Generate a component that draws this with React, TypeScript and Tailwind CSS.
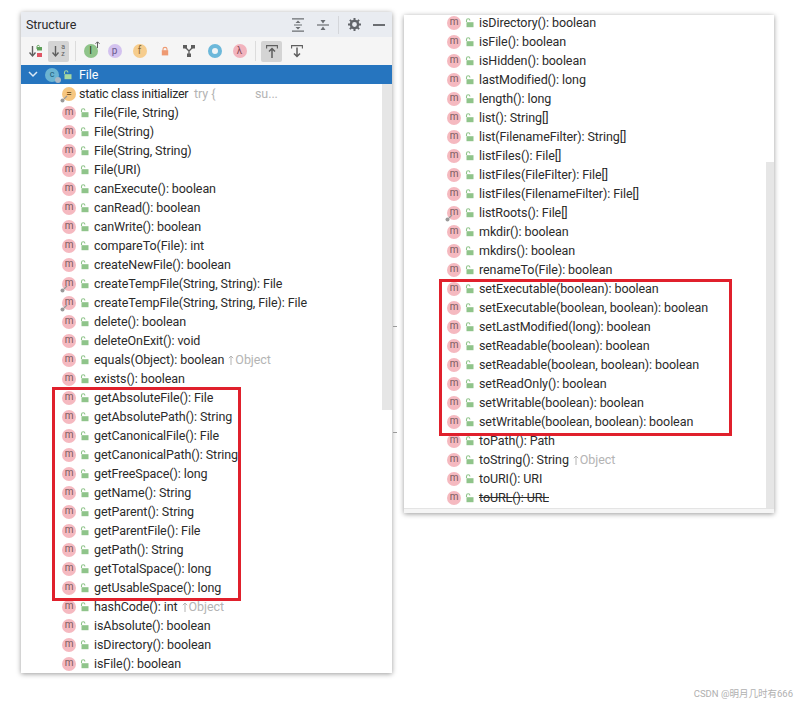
const font = { fontFamily: 'Roboto, "Noto Sans CJK SC", sans-serif' };

type Row = { text: string; inherited?: boolean; pin?: boolean; deprecated?: boolean };

const leftRows: Row[] = [
  { text: "File(File, String)" },
  { text: "File(String)" },
  { text: "File(String, String)" },
  { text: "File(URI)" },
  { text: "canExecute(): boolean" },
  { text: "canRead(): boolean" },
  { text: "canWrite(): boolean" },
  { text: "compareTo(File): int" },
  { text: "createNewFile(): boolean" },
  { text: "createTempFile(String, String): File", pin: true },
  { text: "createTempFile(String, String, File): File", pin: true },
  { text: "delete(): boolean" },
  { text: "deleteOnExit(): void" },
  { text: "equals(Object): boolean", inherited: true },
  { text: "exists(): boolean" },
  { text: "getAbsoluteFile(): File" },
  { text: "getAbsolutePath(): String" },
  { text: "getCanonicalFile(): File" },
  { text: "getCanonicalPath(): String" },
  { text: "getFreeSpace(): long" },
  { text: "getName(): String" },
  { text: "getParent(): String" },
  { text: "getParentFile(): File" },
  { text: "getPath(): String" },
  { text: "getTotalSpace(): long" },
  { text: "getUsableSpace(): long" },
  { text: "hashCode(): int", inherited: true },
  { text: "isAbsolute(): boolean" },
  { text: "isDirectory(): boolean" },
  { text: "isFile(): boolean" },
];

const rightRows: Row[] = [
  { text: "isDirectory(): boolean" },
  { text: "isFile(): boolean" },
  { text: "isHidden(): boolean" },
  { text: "lastModified(): long" },
  { text: "length(): long" },
  { text: "list(): String[]" },
  { text: "list(FilenameFilter): String[]" },
  { text: "listFiles(): File[]" },
  { text: "listFiles(FileFilter): File[]" },
  { text: "listFiles(FilenameFilter): File[]" },
  { text: "listRoots(): File[]", pin: true },
  { text: "mkdir(): boolean" },
  { text: "mkdirs(): boolean" },
  { text: "renameTo(File): boolean" },
  { text: "setExecutable(boolean): boolean" },
  { text: "setExecutable(boolean, boolean): boolean" },
  { text: "setLastModified(long): boolean" },
  { text: "setReadable(boolean): boolean" },
  { text: "setReadable(boolean, boolean): boolean" },
  { text: "setReadOnly(): boolean" },
  { text: "setWritable(boolean): boolean" },
  { text: "setWritable(boolean, boolean): boolean" },
  { text: "toPath(): Path" },
  { text: "toString(): String", inherited: true },
  { text: "toURI(): URI" },
  { text: "toURL(): URL", deprecated: true },
];

function Lock({ color = "#8fc48a" }: { color?: string }) {
  return (
    <svg width="9" height="10" viewBox="0 0 9 10" className="shrink-0">
      <path d="M1.5 4V2.6C1.5 1.4 2.3 .8 3.2 .8S4.9 1.4 4.9 2.4" fill="none" stroke={color} strokeWidth="1.1" />
      <rect x="1.5" y="4.2" width="7" height="5" fill={color} />
    </svg>
  );
}

function Pin() {
  return (
    <svg width="8" height="8" viewBox="0 0 8 8" className="absolute left-[-2px] bottom-[-2px]">
      <circle cx="2.5" cy="5.5" r="2" fill="#9a9a9a" />
      <path d="M4 4L7 1" stroke="#9a9a9a" strokeWidth="1.2" />
    </svg>
  );
}

function MethodRow({ row, indent }: { row: Row; indent: string }) {
  return (
    <div className={`flex items-center h-[19px] shrink-0 ${indent}`}>
      <div className="relative w-[14px] h-[14px] rounded-full bg-[#f5b9c0] flex items-center justify-center shrink-0">
        <span className="text-[10px] leading-none text-[#7a5a5e] mt-[-1px]">m</span>
        {row.pin && <Pin />}
      </div>
      <div className="ml-[4px] mr-[5px] flex">
        <Lock />
      </div>
      <span className={`text-[#2b2b2b] whitespace-nowrap ${row.deprecated ? "line-through" : ""}`}>{row.text}</span>
      {row.inherited && (
        <span className="ml-[4px] text-[#b4b4b4] whitespace-nowrap flex items-center">
          <svg width="6" height="10" viewBox="0 0 6 10" className="mr-px">
            <path d="M3 10V1M.8 3.2L3 1L5.2 3.2" fill="none" stroke="#b4b4b4" strokeWidth="1" />
          </svg>
          Object
        </span>
      )}
    </div>
  );
}

function ToolIcon({ className, active, children }: { className: string; active?: boolean; children: React.ReactNode }) {
  return (
    <div className={`w-[21px] h-[21px] flex items-center justify-center shrink-0 rounded-[2px] ${active ? "bg-[#d4d4d4]" : ""} ${className}`}>
      {children}
    </div>
  );
}

function Badge({ bg, fg, label }: { bg: string; fg: string; label: string }) {
  return (
    <div className="w-[14px] h-[14px] rounded-full flex items-center justify-center text-[10px] leading-none" style={{ backgroundColor: bg, color: fg }}>
      {label}
    </div>
  );
}

function SortArrow({ x }: { x: number }) {
  return (
    <g stroke="#5e5e5e" strokeWidth="1.4" fill="none">
      <path d={`M${x} 2V11`} />
      <path d={`M${x - 3} 8.5L${x} 12L${x + 3} 8.5`} />
    </g>
  );
}

function Structure() {
  return (
    <div className="w-[371px] h-[661px] ml-[21px] mt-[12px] shrink-0 flex flex-col bg-white shadow-[0_1px_5px_rgba(0,0,0,0.4)] relative overflow-hidden">
      <div className="h-[25px] bg-[#e9ecf1] flex items-center shrink-0">
        <span className="ml-[5px] text-[#2b2b2b]">Structure</span>
        <svg width="12" height="14" viewBox="0 0 12 14" className="ml-auto">
          <path d="M0 .8H12M0 13.2H12M2 7H10" stroke="#6b6e72" strokeWidth="1.2" />
          <path d="M6 2.5L3.5 5H8.5ZM6 11.5L3.5 9H8.5Z" fill="#6b6e72" />
        </svg>
        <svg width="12" height="14" viewBox="0 0 12 14" className="ml-[13px]">
          <path d="M0 7H12" stroke="#6b6e72" strokeWidth="1.2" />
          <path d="M6 5.5L3.5 2H8.5ZM6 8.5L3.5 12H8.5Z" fill="#6b6e72" />
        </svg>
        <div className="w-px h-[18px] bg-[#d4d6da] ml-[9px]" />
        <svg width="13" height="13" viewBox="0 0 13 13" className="ml-[9px]">
          <circle cx="6.5" cy="6.5" r="3.6" fill="none" stroke="#62656a" strokeWidth="2.4" />
          <path d="M6.5 0V2.5M6.5 10.5V13M0 6.5H2.5M10.5 6.5H13M1.9 1.9L3.6 3.6M9.4 9.4L11.1 11.1M1.9 11.1L3.6 9.4M9.4 3.6L11.1 1.9" stroke="#62656a" strokeWidth="2" />
        </svg>
        <div className="w-[12px] h-[2px] bg-[#6b6e72] ml-[12px] mr-[7px]" />
      </div>
      <div className="h-[28px] bg-[#f5f5f5] flex items-center shrink-0">
        <ToolIcon className="ml-[4px]">
          <svg width="14" height="14" viewBox="0 0 14 14">
            <SortArrow x={3.5} />
            <path d="M8 5V2.5C8 1 10.5 1 10.5 2.5" fill="none" stroke="#5fa05a" strokeWidth="1" />
            <rect x="8" y="3" width="5" height="3.5" fill="#5fa05a" />
            <rect x="8" y="9" width="5" height="4" fill="#e05565" />
          </svg>
        </ToolIcon>
        <ToolIcon className="ml-[2px]" active>
          <div className="flex items-center">
            <svg width="8" height="14" viewBox="0 0 8 14">
              <SortArrow x={3.5} />
            </svg>
            <div className="flex flex-col text-[7px] leading-[7px] text-[#5e5e5e] ml-[1px]">
              <span>a</span>
              <span>z</span>
            </div>
          </div>
        </ToolIcon>
        <div className="w-px h-[20px] bg-[#dcdcdc] ml-[6px]" />
        <ToolIcon className="ml-[4px]">
          <div className="relative">
            <Badge bg="#8fc48a" fg="#24401f" label="I" />
            <svg width="5" height="7" viewBox="0 0 5 7" className="absolute right-[-2px] top-[-3px]">
              <path d="M2.5 7V1M.5 2.8L2.5 .8L4.5 2.8" fill="none" stroke="#5e5e5e" strokeWidth="1" />
            </svg>
          </div>
        </ToolIcon>
        <ToolIcon className="ml-[3px]"><Badge bg="#d3c2ef" fg="#6a5a8c" label="p" /></ToolIcon>
        <ToolIcon className="ml-[4px]"><Badge bg="#f6cd8e" fg="#8c6a33" label="f" /></ToolIcon>
        <ToolIcon className="ml-[4px]">
          <svg width="8" height="10" viewBox="0 0 8 10">
            <path d="M2 4.5V3C2 .8 6 .8 6 3V4.5" fill="none" stroke="#ee9a72" strokeWidth="1.1" />
            <rect x=".8" y="4.2" width="6.4" height="5.2" fill="#ee9a72" />
          </svg>
        </ToolIcon>
        <ToolIcon className="ml-[3px]">
          <svg width="12" height="12" viewBox="0 0 12 12">
            <path d="M2 2L6 6L10 2M6 6V10" fill="none" stroke="#5e5e5e" strokeWidth="1.3" />
            <rect x="0" y="0" width="4" height="3.5" fill="#5e5e5e" />
            <rect x="8" y="0" width="4" height="3.5" fill="#5e5e5e" />
            <rect x="4" y="8.5" width="4" height="3.5" fill="#5e5e5e" />
          </svg>
        </ToolIcon>
        <ToolIcon className="ml-[5px]">
          <div className="w-[14px] h-[14px] rounded-full border-[4px] border-[#6cb8da] bg-[#f0f4f6]" />
        </ToolIcon>
        <ToolIcon className="ml-[4px]"><Badge bg="#f2b3bd" fg="#8a4a55" label="λ" /></ToolIcon>
        <div className="w-px h-[20px] bg-[#dcdcdc] ml-[5px]" />
        <ToolIcon className="ml-[5px]" active>
          <svg width="12" height="13" viewBox="0 0 12 13">
            <path d="M.6 3.5V.6H11.4V3.5" fill="none" stroke="#5e5e5e" strokeWidth="1.1" />
            <path d="M6 13V4M3 6.5L6 3.5L9 6.5" fill="none" stroke="#5e5e5e" strokeWidth="1.5" />
          </svg>
        </ToolIcon>
        <ToolIcon className="ml-[4px]">
          <svg width="12" height="13" viewBox="0 0 12 13">
            <path d="M.6 3.5V.6H11.4V3.5" fill="none" stroke="#5e5e5e" strokeWidth="1.1" />
            <path d="M6 2.5V11.5M3 8.5L6 11.5L9 8.5" fill="none" stroke="#5e5e5e" strokeWidth="1.5" />
          </svg>
        </ToolIcon>
      </div>
      <div className="h-[19px] bg-[#2675bf] flex items-center shrink-0 text-white">
        <svg width="10" height="7" viewBox="0 0 10 7" className="ml-[7px]">
          <path d="M1 1L5 5L9 1" fill="none" stroke="#dbe8f5" strokeWidth="1.5" />
        </svg>
        <div className="relative ml-[7px] w-[14px] h-[14px] rounded-full bg-[#6bb4d2] flex items-center justify-center text-[9px] leading-none text-[#1f5f7a]">
          c
          <span className="absolute right-[-2px] bottom-[-1px] w-[6px] h-[6px] rounded-full bg-[#a9b8c4]" />
        </div>
        <div className="ml-[4px] flex">
          <Lock color="#a6d8a0" />
        </div>
        <span className="ml-[7px]">File</span>
      </div>
      <div className="flex items-center h-[19px] shrink-0 pl-[41px]">
        <div className="relative w-[14px] h-[14px] rounded-full bg-[#f6c680] flex items-center justify-center shrink-0 text-[10px] leading-none text-[#7d5a22]">
          =
          <Pin />
        </div>
        <span className="ml-[3px] text-[#2b2b2b] whitespace-nowrap w-[115px] tracking-[-0.3px]">static class initializer</span>
        <span className="text-[#b4b4b4] w-[61px] whitespace-nowrap">try {"{"}</span>
        <span className="text-[#b4b4b4]">su...</span>
      </div>
      {leftRows.map((row) => (
        <MethodRow key={row.text} row={row} indent="pl-[41px]" />
      ))}
      <div className="absolute left-[361px] top-[72px] w-[10px] h-[326px] bg-[#e6e6e6]" />
      <div className="absolute left-[31px] top-[375px] w-[189px] h-[214px] border-[3px] border-[#e0202c]" />
    </div>
  );
}

function Continued() {
  return (
    <div className="w-[370px] h-[498px] ml-[12px] mt-[15px] shrink-0 flex flex-col bg-white shadow-[0_1px_5px_rgba(0,0,0,0.4)] relative overflow-hidden">
      <div className="flex-1 min-h-0 mt-[-2px]">
        {rightRows.map((row) => (
          <MethodRow key={row.text} row={row} indent="pl-[43px]" />
        ))}
      </div>
      <div className="h-[5px] bg-[#f5f5f5] border-t border-[#e4e4e4] shrink-0" />
      <div className="absolute left-[362px] top-[147px] w-[8px] h-[346px] bg-[#e6e6e6]" />
      <div className="absolute left-[35px] top-[264px] w-[293px] h-[157px] border-[3px] border-[#e0202c]" />
    </div>
  );
}

export default function App() {
  return (
    <div className="relative w-[800px] h-[703px] bg-white flex items-start text-[12.5px] tracking-[-0.08px] leading-[19px] overflow-hidden" style={font}>
      <Structure />
      <Continued />
      <div className="absolute left-[393px] top-[326px] w-[4px] h-px bg-[#9a9a9a]" />
      <div className="absolute left-[393px] top-[432px] w-[4px] h-px bg-[#9a9a9a]" />
      <div className="absolute right-[7px] bottom-[2px] text-[9.5px] tracking-normal leading-[14px] text-[#b0b0b0]">CSDN @明月几时有666</div>
    </div>
  );
}
